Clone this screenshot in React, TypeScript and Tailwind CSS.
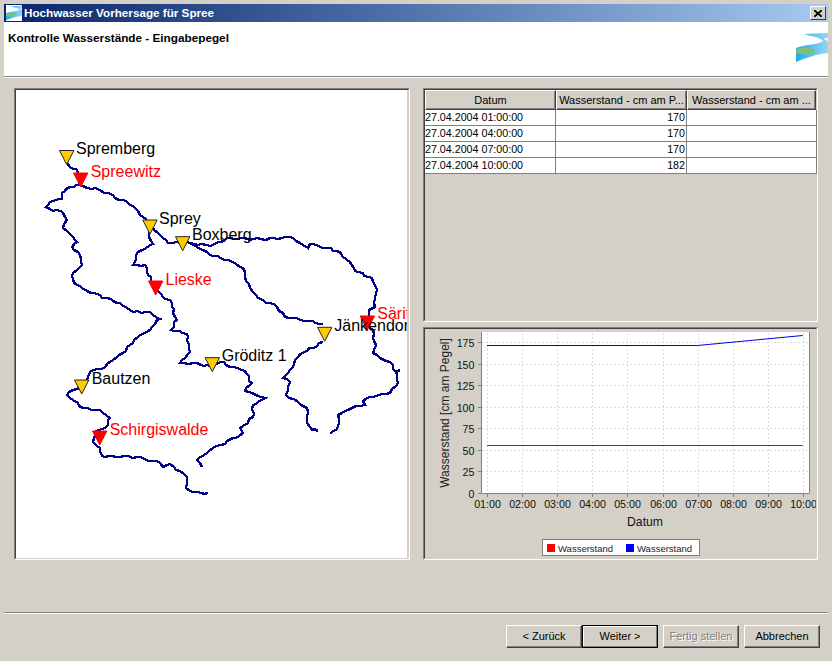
import React, { FC, ReactNode } from 'react';

const rivers = [
  // Spremberg - Spreewitz - Sprey - Boxberg - Saeritz - Ende
  '66.7,161 70,167 76,169 78,177 80,185 86.7,188 100,190 113,195 115,198 126.7,201.7 135,208 143,216.7 150,226.7 158,233 163,238 168,243 180,243 190,243 210,246 220,241.7 226.7,238.3 253,239 281.7,238.3 293,237.7 300,243 308,247.7 310,244 326.7,248 336.7,250.7 350,261.7 355,270.7 371.7,278 377.3,290 375,298 375,306.7 369,310 369,316.7 366.7,325 373.3,330 372.7,338 376,345 373.3,353.3 380,358 390,361.7 396,371.7 398.3,383 390,393 370,396.7 362.7,400.7 365,405 351.7,408 338.3,415 338.3,426.7 330,434',
  // Spreewitz - Westbogen - Bautzen - Schirgiswalde
  '80,185 70,187.3 61.7,193.3 61.7,199 50,201.7 45.7,207.3 63.3,213.3 66.7,220 63.3,228.3 73.3,236.7 76.7,241.7 71.7,246.7 80,255 81.7,265 71.7,275 75,284 86.7,290.7 106.7,298.3 120,303.3 133.3,311.7 150,311.7 160,319.3 156.7,320 150,330 140,335 130,345 123,353 110,361.7 105,366.7 90,371.7 86.7,380 81,387 73.3,390 66.7,395 73.3,400 83.3,408 100,410 110,418 105,428 95,431.7 93.3,441.7 100,448 101.7,456 120,457 136.7,457 160,462.7 163.3,467.3 170,464 186.7,476.7 186,488 193.3,492.3 208.3,493.3',
  // Sprey - Lieske - Groeditz
  '150,228 149.3,236.7 153,244 138.3,251.7 132.7,265 145,265 148.3,275 155,288 163.3,296.7 171.7,303.3 173.3,313.3 176.7,320 171,330 186.7,334 190,351.7 180,362.7 196.7,363.3 211.7,366.7 220,361.7 230,366.7 245,370.7 251.7,383 245,390.7 265,398.3 252.7,405 253.3,416.7 240,428.3 243.3,433.3 213.3,448.3 196.7,460 201.7,466.7',
  // Boxberg - Jaenkendorf - Sued
  '190,243 203.3,250 210,255 228.3,260 243.3,268.3 245,276.7 250,288.3 258.3,298.3 276.7,306.7 285,316.7 323.3,324',
  '323.3,341.7 300,354 290,370 282.7,378.3 290,381.7 286,395 298.3,401.7 308.3,411.7 306.7,420 311.7,430 318.3,430.7',
  // kleine Stichlinie
  '396,371.7 400,370',
];

// Flusslinie wie im Kartenbild leicht zackig machen
const roughen = (line: string) => {
  const pts = line.split(' ').map((p) => p.split(',').map(Number));
  const out: string[] = [];
  let n = 0;
  pts.forEach(([x, y], i) => {
    const next = pts[i + 1];
    if (!next) {
      out.push(`${Math.round(x)},${Math.round(y)}`);
      return;
    }
    const steps = Math.max(1, Math.round(Math.hypot(next[0] - x, next[1] - y) / 4));
    for (let s = 0; s < steps; s++) {
      n += 1;
      const t = s / steps;
      const jx = s === 0 ? 0 : Math.sin(n * 2.3) * 0.9;
      const jy = s === 0 ? 0 : Math.cos(n * 1.7) * 0.9;
      out.push(`${Math.round(x + (next[0] - x) * t + jx)},${Math.round(y + (next[1] - y) * t + jy)}`);
    }
  });
  return out.join(' ');
};

const markers = [
  { x: 66.7, y: 150.5, red: false },
  { x: 80.7, y: 173, red: true },
  { x: 150, y: 220, red: false },
  { x: 182.7, y: 236.7, red: false },
  { x: 155.7, y: 281, red: true },
  { x: 324.7, y: 327.3, red: false },
  { x: 367.3, y: 316, red: true },
  { x: 212.3, y: 357.7, red: false },
  { x: 81.7, y: 380, red: false },
  { x: 99.7, y: 431, red: true },
];

const labels = [
  { name: 'Spremberg', x: 76, y: 154, red: false },
  { name: 'Spreewitz', x: 90.7, y: 176.7, red: true },
  { name: 'Sprey', x: 159, y: 224, red: false },
  { name: 'Boxberg', x: 192, y: 240, red: false },
  { name: 'Lieske', x: 165.5, y: 285, red: true },
  { name: 'Säritz', x: 377.3, y: 319.3, red: true },
  { name: 'Jänkendorf', x: 334.3, y: 330.7, red: false },
  { name: 'Gröditz 1', x: 221.7, y: 360.7, red: false },
  { name: 'Bautzen', x: 91.7, y: 384, red: false },
  { name: 'Schirgiswalde', x: 109.7, y: 435, red: true },
];

const rows = [
  ['27.04.2004 01:00:00', '170'],
  ['27.04.2004 04:00:00', '170'],
  ['27.04.2004 07:00:00', '170'],
  ['27.04.2004 10:00:00', '182'],
];

const hours = ['01:00', '02:00', '03:00', '04:00', '05:00', '06:00', '07:00', '08:00', '09:00', '10:00'];
const ticks = [0, 25, 50, 75, 100, 125, 150, 175];

const hourX = (i: number) => Math.round(62.3 + i * 35.04) + 0.5;
const tickY = (v: number) => Math.round(164 - v * 0.8625) + 0.5;

const Sunken: FC<{ className: string; children: ReactNode }> = ({ className, children }) => (
  <div className={`border border-[#808080] border-r-white border-b-white ${className}`}>
    <div className="h-full w-full border border-[#404040] border-r-[#d4d0c8] border-b-[#d4d0c8]">{children}</div>
  </div>
);

const Logo: FC<{ className: string; id: string }> = ({ className, id }) => (
  <svg className={className} viewBox="0 0 32 29">
    <defs>
      <linearGradient id={id} x1="0" y1="0" x2="1" y2="0">
        <stop offset="0" stopColor="#19aee6" />
        <stop offset="1" stopColor="#9ad4f2" />
      </linearGradient>
    </defs>
    <path d="M8 1 L32 0 L32 5 C26 5 28 7 32 8 L32 20 C20 21 10 25 0 29 L0 15 C10 11 22 12 27 8 C24 4 14 3 8 1 Z" fill={`url(#${id})`} />
    <ellipse cx="9" cy="18" rx="10" ry="3.6" fill="#7cbf7c" />
  </svg>
);

const Btn: FC<{ label: string; mark?: boolean; off?: boolean }> = ({ label, mark, off }) => (
  <div className={`flex h-[23px] w-[76px] items-center justify-center border text-[11px] ${mark ? 'border-black shadow-[inset_-1px_-1px_0_#808080,inset_1px_1px_0_#fff]' : 'border-white border-r-[#404040] border-b-[#404040] shadow-[inset_-1px_-1px_0_#808080]'} ${off ? 'text-[#808080] [text-shadow:1px_1px_0_#fff]' : 'text-black'}`}>
    {label}
  </div>
);

const HeadCell: FC<{ label: string; className: string }> = ({ label, className }) => (
  <div className={`flex h-[20px] items-center justify-center border border-white border-r-[#404040] border-b-[#404040] text-[11px] shadow-[inset_-1px_-1px_0_#808080] ${className}`}>
    {label}
  </div>
);

const Chart: FC = () => (
  <svg width="391" height="229" className="block" fontFamily="'Liberation Sans', Arial, sans-serif">
    <rect x="56" y="3" width="328" height="161" fill="white" />
    {hours.map((h, i) => (
      <line key={h} x1={hourX(i)} x2={hourX(i)} y1="4" y2="164" stroke="#dcdcdc" strokeDasharray="2 2" />
    ))}
    {ticks.map((t) => (
      <line key={t} x1="57" x2="384" y1={tickY(t)} y2={tickY(t)} stroke="#dcdcdc" strokeDasharray="2 2" />
    ))}
    <path d="M56.5 3 V164.5 H384.5 V3" fill="none" stroke="#808080" />
    {ticks.map((t) => (
      <g key={t}>
        <line x1="53" x2="56" y1={tickY(t)} y2={tickY(t)} stroke="#808080" />
        <text x="49.5" y={tickY(t) + 4} textAnchor="end" fontSize="10.7" fill="#111">{t}</text>
      </g>
    ))}
    {hours.map((h, i) => (
      <g key={h}>
        <line x1={hourX(i)} x2={hourX(i)} y1="164" y2="168" stroke="#808080" />
        <text x={hourX(i)} y="179" textAnchor="middle" fontSize="10.7" fill="#111">{h}</text>
      </g>
    ))}
    <path d="M62 16.5 H272.5 L377.7 6.5" fill="none" stroke="#0000e0" />
    <path d="M62 116.5 H377.7" fill="none" stroke="#e00000" />
    <text x="220" y="197" textAnchor="middle" fontSize="12.2" fill="#111">Datum</text>
    <text transform="translate(24 84) rotate(-90)" textAnchor="middle" fontSize="12" fill="#222">Wasserstand [cm am Pegel]</text>
    <rect x="117.5" y="210.5" width="157" height="16" fill="white" stroke="#808080" />
    <rect x="122" y="215" width="8" height="8" fill="#ff0000" />
    <text x="133" y="222.7" fontSize="9.5" fill="#222">Wasserstand</text>
    <rect x="201" y="215" width="8" height="8" fill="#0000ff" />
    <text x="212" y="222.7" fontSize="9.5" fill="#222">Wasserstand</text>
  </svg>
);

export default function App() {
  return (
    <div className="flex h-[661px] w-[832px] flex-col overflow-hidden bg-[#d4d0c8] p-[4px] font-['Liberation_Sans',Arial,sans-serif]">
      <div className="flex h-[18px] shrink-0 items-center bg-gradient-to-r from-[#0a246a] to-[#a6caf0] pr-[2px] pl-[2px]">
        <Logo className="h-4 w-4 bg-white" id="flow-small" />
        <span className="ml-[2px] text-[11.7px] font-bold text-white">Hochwasser Vorhersage für Spree</span>
        <div className="ml-auto flex h-[14px] w-[16px] items-center justify-center border border-white border-r-[#404040] border-b-[#404040] bg-[#d4d0c8]">
          <svg width="8" height="7" viewBox="0 0 8 7">
            <path d="M0 0 L8 7 M8 0 L0 7" stroke="#000" strokeWidth="1.7" />
          </svg>
        </div>
      </div>
      <div className="flex h-[54px] shrink-0 justify-between bg-white pl-[4px]">
        <span className="mt-[9px] text-[11.75px] leading-[14px] font-bold text-black">Kontrolle Wasserstände - Eingabepegel</span>
        <Logo className="mt-[11px] h-[29px] w-[32px]" id="flow-large" />
      </div>
      <div className="h-[2px] shrink-0 border-t border-[#808080] bg-white" />
      <div className="flex flex-1 gap-[13px] pt-[10px] pl-[10px]">
        <Sunken className="h-[472px] w-[396px]">
          <div className="h-full w-full overflow-hidden">
            <svg width="391" height="468" viewBox="16 90 391 468" className="block bg-white" fontFamily="'Liberation Sans', Arial, sans-serif">
              {rivers.map((r) => (
                <polyline key={r} points={roughen(r)} fill="none" stroke="#00008b" strokeWidth="2.3" shapeRendering="crispEdges" />
              ))}
              {markers.map((m) => (
                <polygon
                  key={`${m.x}-${m.y}`}
                  points={`${m.x - 7.2},${m.y} ${m.x + 7.2},${m.y} ${m.x},${m.y + 14}`}
                  fill={m.red ? '#ff0000' : '#ffcc00'}
                  stroke={m.red ? '#ff0000' : '#222'}
                  strokeWidth="1"
                />
              ))}
              {labels.map((l) => (
                <text key={l.name} x={l.x} y={l.y} fontSize="16" fill={l.red ? '#ff0000' : '#000'}>{l.name}</text>
              ))}
            </svg>
          </div>
        </Sunken>
        <div className="flex w-[395px] flex-col gap-[5px]">
          <Sunken className="h-[234px]">
            <div className="text-[10.7px] text-black">
              <div className="flex">
                <HeadCell label="Datum" className="w-[131px]" />
                <HeadCell label="Wasserstand - cm am P..." className="w-[131px]" />
                <HeadCell label="Wasserstand - cm am ..." className="w-[129px]" />
              </div>
              {rows.map(([date, value]) => (
                <div key={date} className="flex h-[16px] w-[392px] border-b border-[#808080] bg-white leading-[15px]">
                  <div className="w-[131px] border-r border-[#808080]">{date}</div>
                  <div className="w-[131px] border-r border-[#808080] pr-[1px] text-right">{value}</div>
                  <div className="flex-1 border-r border-[#808080]" />
                </div>
              ))}
            </div>
          </Sunken>
          <Sunken className="h-[233px]">
            <Chart />
          </Sunken>
        </div>
      </div>
      <div className="h-[2px] shrink-0 border-t border-[#808080] bg-white" />
      <div className="flex h-[43px] shrink-0 items-start justify-end pt-[11px] pr-[8px]">
        <Btn label="< Zurück" />
        <Btn label="Weiter >" mark />
        <div className="w-[5px]" />
        <Btn label="Fertig stellen" off />
        <div className="w-[5px]" />
        <Btn label="Abbrechen" />
      </div>
    </div>
  );
}
